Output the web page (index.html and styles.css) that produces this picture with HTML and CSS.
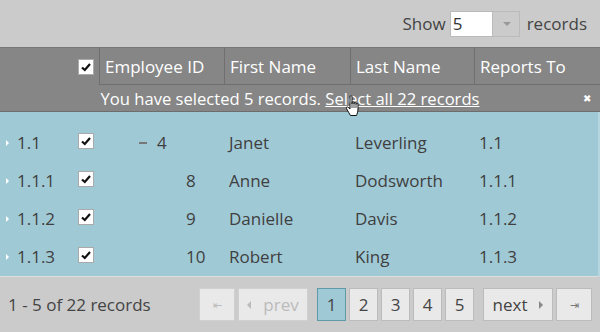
FILE: index.html
```html
<!DOCTYPE html>
<html lang="en">
<head>
    <meta charset="UTF-8">
    <title>Employees</title>
    <link rel="stylesheet" href="styles.css">
</head>
<body>
    <div class="grid">
        <div class="toolbar">
            <span>Show</span>
            <span class="select"><span class="select-value">5</span><span class="select-arrow"></span></span>
            <span>records</span>
        </div>

        <div class="head-row">
            <div class="cell tree-cell"></div>
            <div class="cell check-cell"><span class="check"><svg width="12" height="12" viewBox="0 0 12 12"><path d="M2 6.5 L4.8 9 L10 3" fill="none" stroke="#111" stroke-width="2.2"/></svg></span></div>
            <div class="cell head-cell">Employee ID</div>
            <div class="cell head-cell">First Name</div>
            <div class="cell head-cell">Last Name</div>
            <div class="cell head-cell">Reports To</div>
        </div>

        <div class="selection-bar">
            <span>You have selected 5 records. <a class="select-all">Select all 22 records</a></span>
            <span class="close">&#x2716;</span>
            <svg class="cursor" width="18" height="22" viewBox="0 0 18 22">
                <path d="M5 1.5 C5 0.6 7 0.6 7 1.5 L7 9 L7 7.5 C7 6.6 9 6.6 9 7.5 L9 9 L9 8.3 C9 7.4 11 7.4 11 8.3 L11 9.5 L11 9.2 C11 8.3 13 8.3 13 9.2 L13 14 C13 17 12 19 11.5 20.5 L5.5 20.5 C4.5 18.5 2.5 16 1.5 13.5 C1 12.3 2.2 11.3 3.2 12.3 L5 14 Z" fill="#fff" stroke="#111" stroke-width="1" stroke-linejoin="round"/>
                <path d="M7 9 L7 13 M9 9 L9 13 M11 9.5 L11 13" stroke="#111" stroke-width="0.8"/>
            </svg>
        </div>

        <div class="rows">
            <div class="row">
                <div class="cell tree-cell"><span class="arrow"></span>1.1</div>
                <div class="cell check-cell"><span class="check"><svg width="12" height="12" viewBox="0 0 12 12"><path d="M2 6.5 L4.8 9 L10 3" fill="none" stroke="#111" stroke-width="2.2"/></svg></span></div>
                <div class="cell id-cell level-1"><span class="collapse"></span>4</div>
                <div class="cell">Janet</div>
                <div class="cell">Leverling</div>
                <div class="cell">1.1</div>
            </div>
            <div class="row">
                <div class="cell tree-cell"><span class="arrow"></span>1.1.1</div>
                <div class="cell check-cell"><span class="check"><svg width="12" height="12" viewBox="0 0 12 12"><path d="M2 6.5 L4.8 9 L10 3" fill="none" stroke="#111" stroke-width="2.2"/></svg></span></div>
                <div class="cell id-cell level-2">8</div>
                <div class="cell">Anne</div>
                <div class="cell">Dodsworth</div>
                <div class="cell">1.1.1</div>
            </div>
            <div class="row">
                <div class="cell tree-cell"><span class="arrow"></span>1.1.2</div>
                <div class="cell check-cell"><span class="check"><svg width="12" height="12" viewBox="0 0 12 12"><path d="M2 6.5 L4.8 9 L10 3" fill="none" stroke="#111" stroke-width="2.2"/></svg></span></div>
                <div class="cell id-cell level-2">9</div>
                <div class="cell">Danielle</div>
                <div class="cell">Davis</div>
                <div class="cell">1.1.2</div>
            </div>
            <div class="row">
                <div class="cell tree-cell"><span class="arrow"></span>1.1.3</div>
                <div class="cell check-cell"><span class="check"><svg width="12" height="12" viewBox="0 0 12 12"><path d="M2 6.5 L4.8 9 L10 3" fill="none" stroke="#111" stroke-width="2.2"/></svg></span></div>
                <div class="cell id-cell level-2">10</div>
                <div class="cell">Robert</div>
                <div class="cell">King</div>
                <div class="cell">1.1.3</div>
            </div>
        </div>

        <div class="pager">
            <span class="pager-info">1 - 5 of 22 records</span>
            <div class="pager-buttons">
                <span class="page-btn edge disabled">&#x21E4;</span>
                <span class="page-btn wide disabled"><span class="tri-left"></span>prev</span>
                <span class="page-btn number active">1</span>
                <span class="page-btn number">2</span>
                <span class="page-btn number">3</span>
                <span class="page-btn number">4</span>
                <span class="page-btn number">5</span>
                <span class="page-btn wide next">next<span class="tri-right"></span></span>
                <span class="page-btn edge last">&#x21E5;</span>
            </div>
        </div>
    </div>
</body>
</html>
```

FILE: styles.css
```css
body {
    margin: 0;
    padding: 0;
    font-family: "Open Sans", "Noto Sans", sans-serif;
    font-size: 17px;
    color: #444;
    background-color: #ccc;
}

.grid {
    width: 600px;
    height: 332px;
    overflow: hidden;
    background-color: #cbcbcb;
}

.toolbar {
    height: 47px;
    display: flex;
    align-items: center;
    justify-content: flex-end;
    gap: 4px;
    padding-right: 13px;
    box-sizing: border-box;
    color: #444;
}

.select {
    display: flex;
    height: 26px;
    border: 1px solid #bbb;
    box-sizing: border-box;
    margin-right: 3px;
}

.select-value {
    width: 41px;
    background-color: #fff;
    padding-left: 2px;
    line-height: 24px;
    box-sizing: border-box;
    color: #333;
}

.select-arrow {
    width: 26px;
    border-left: 1px solid #bbb;
    position: relative;
}

.select-arrow::after {
    content: "";
    position: absolute;
    left: 10px;
    top: 10px;
    border-left: 4px solid transparent;
    border-right: 4px solid transparent;
    border-top: 4px solid #999;
}

.head-row, .row {
    display: grid;
    grid-template-columns: 70px 29px 125px 126px 124px 1fr;
}

.head-row {
    height: 38px;
    background-color: #868686;
    border-top: 1px solid #777;
    box-sizing: border-box;
    color: #fff;
}

.cell {
    display: flex;
    align-items: center;
    white-space: nowrap;
}

.head-cell {
    border-left: 1px solid #6f6f6f;
    border-bottom: 1px solid #6f6f6f;
    padding-left: 5px;
    padding-top: 1px;
}

.check-cell {
    justify-content: flex-start;
    padding-left: 8px;
}

.check {
    width: 16px;
    height: 16px;
    background-color: #fff;
    border: 1px solid #aaa;
    box-sizing: border-box;
    display: flex;
    align-items: center;
    justify-content: center;
}

.selection-bar {
    height: 26px;
    background-color: #868686;
    border-bottom: 1px solid #6d6d6d;
    color: #fff;
    font-size: 16.6px;
    display: flex;
    align-items: center;
    justify-content: center;
    padding-right: 20px;
    position: relative;
}

.select-all {
    color: #fff;
    text-decoration: underline;
}

.close {
    position: absolute;
    right: 9px;
    top: 6px;
    font-size: 10px;
    color: #fff;
}

.cursor {
    position: absolute;
    left: 345px;
    top: 10px;
}

.rows {
    background-color: #a0c9d6;
    padding-top: 11px;
    height: 165px;
    box-sizing: border-box;
    border-right: 2px solid #b5d6df;
    border-bottom: 1px solid #ddd;
}

.row {
    height: 38px;
    color: #3f3f3f;
    padding-top: 1px;
    box-sizing: border-box;
}

.row .cell {
    padding-left: 5px;
}

.row .tree-cell {
    padding-left: 6px;
}

.row .check-cell {
    padding-left: 8px;
    padding-bottom: 4px;
}

.arrow {
    display: inline-block;
    border-top: 3px solid transparent;
    border-bottom: 3px solid transparent;
    border-left: 3px solid #fff;
    margin-right: 8px;
}

.id-cell.level-1 {
    padding-left: 40px;
}

.id-cell.level-2 {
    padding-left: 87px;
}

.collapse {
    display: inline-block;
    width: 8px;
    height: 2px;
    background-color: #777;
    margin-right: 10px;
}

.pager {
    height: 55px;
    display: flex;
    align-items: center;
    justify-content: space-between;
    padding: 0 8px;
    color: #444;
}

.pager-buttons {
    display: flex;
    gap: 3px;
}

.page-btn {
    height: 33px;
    background-color: #e9e9e9;
    border: 1px solid #bcbcbc;
    box-sizing: border-box;
    display: flex;
    align-items: center;
    justify-content: center;
    color: #444;
}

.page-btn.number {
    width: 29px;
}

.page-btn.edge {
    width: 36px;
    font-size: 11px;
}

.page-btn.wide {
    width: 70px;
}

.page-btn.wide.disabled {
    margin-right: 6px;
}

.page-btn.next {
    margin-left: 6px;
}

.page-btn.disabled {
    color: #bbb;
    border-color: #d0d0d0;
}

.page-btn.last {
    color: #777;
}

.page-btn.active {
    background-color: #a0c9d6;
    border-color: #5e9aa8;
}

.tri-left, .tri-right {
    display: inline-block;
    border-top: 4px solid transparent;
    border-bottom: 4px solid transparent;
}

.tri-left {
    border-right: 4px solid #bbb;
    margin-right: 12px;
}

.tri-right {
    border-left: 4px solid #888;
    margin-left: 12px;
}
```
